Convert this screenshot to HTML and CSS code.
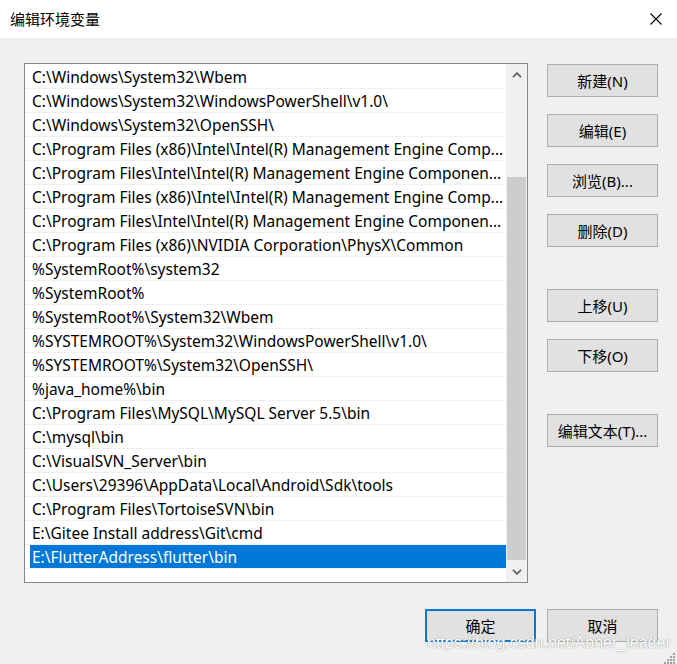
FILE: index.html
```html
<!DOCTYPE html>
<html lang="zh-CN">
<head>
<meta charset="utf-8">
<title>编辑环境变量</title>
<link rel="stylesheet" href="styles.css">
</head>
<body>
<div class="window">
  <div class="titlebar">
    <span class="title">编辑环境变量</span>
    <span class="close">
      <svg width="12" height="12" viewBox="0 0 12 12"><path d="M0.5 0.5 L11.5 11.5 M11.5 0.5 L0.5 11.5" stroke="#000" stroke-width="1.1" fill="none"/></svg>
    </span>
  </div>
  <div class="body">
    <div class="main">
      <div class="listbox">
        <div class="rows">
          <div class="row"><span class="cell">C:\Windows\System32\Wbem</span></div>
          <div class="row"><span class="cell">C:\Windows\System32\WindowsPowerShell\v1.0\</span></div>
          <div class="row"><span class="cell">C:\Windows\System32\OpenSSH\</span></div>
          <div class="row"><span class="cell">C:\Program Files (x86)\Intel\Intel(R) Management Engine Comp...</span></div>
          <div class="row"><span class="cell">C:\Program Files\Intel\Intel(R) Management Engine Componen...</span></div>
          <div class="row"><span class="cell">C:\Program Files (x86)\Intel\Intel(R) Management Engine Comp...</span></div>
          <div class="row"><span class="cell">C:\Program Files\Intel\Intel(R) Management Engine Componen...</span></div>
          <div class="row"><span class="cell">C:\Program Files (x86)\NVIDIA Corporation\PhysX\Common</span></div>
          <div class="row"><span class="cell">%SystemRoot%\system32</span></div>
          <div class="row"><span class="cell">%SystemRoot%</span></div>
          <div class="row"><span class="cell">%SystemRoot%\System32\Wbem</span></div>
          <div class="row"><span class="cell">%SYSTEMROOT%\System32\WindowsPowerShell\v1.0\</span></div>
          <div class="row"><span class="cell">%SYSTEMROOT%\System32\OpenSSH\</span></div>
          <div class="row"><span class="cell">%java_home%\bin</span></div>
          <div class="row"><span class="cell">C:\Program Files\MySQL\MySQL Server 5.5\bin</span></div>
          <div class="row"><span class="cell">C:\mysql\bin</span></div>
          <div class="row"><span class="cell">C:\VisualSVN_Server\bin</span></div>
          <div class="row"><span class="cell">C:\Users\29396\AppData\Local\Android\Sdk\tools</span></div>
          <div class="row"><span class="cell">C:\Program Files\TortoiseSVN\bin</span></div>
          <div class="row"><span class="cell">E:\Gitee Install address\Git\cmd</span></div>
          <div class="row selected"><span class="cell">E:\FlutterAddress\flutter\bin</span></div>
        </div>
        <div class="scrollbar">
          <div class="arrow">
            <svg width="10" height="6" viewBox="0 0 10 6"><path d="M1 5.2 L5 1.2 L9 5.2" stroke="#606060" stroke-width="1.8" fill="none"/></svg>
          </div>
          <div class="track-before"></div>
          <div class="thumb"></div>
          <div class="track-after"></div>
          <div class="arrow">
            <svg width="10" height="6" viewBox="0 0 10 6"><path d="M1 0.8 L5 4.8 L9 0.8" stroke="#606060" stroke-width="1.8" fill="none"/></svg>
          </div>
        </div>
      </div>
      <div class="buttons">
        <button class="btn">新建(N)</button>
        <button class="btn">编辑(E)</button>
        <button class="btn">浏览(B)...</button>
        <button class="btn">删除(D)</button>
        <button class="btn group">上移(U)</button>
        <button class="btn">下移(O)</button>
        <button class="btn group">编辑文本(T)...</button>
      </div>
    </div>
    <div class="footer">
      <button class="btn default">确定</button>
      <button class="btn">取消</button>
    </div>
    <div class="watermark">https://blog.csdn.net/Abner_leader</div>
    <div class="grip">
      <svg width="12" height="12" viewBox="0 0 12 12" fill="#a0a0a0">
        <rect x="9" y="0" width="2" height="2"/>
        <rect x="6" y="3" width="2" height="2"/><rect x="9" y="3" width="2" height="2"/>
        <rect x="3" y="6" width="2" height="2"/><rect x="6" y="6" width="2" height="2"/><rect x="9" y="6" width="2" height="2"/>
        <rect x="0" y="9" width="2" height="2"/><rect x="3" y="9" width="2" height="2"/><rect x="6" y="9" width="2" height="2"/><rect x="9" y="9" width="2" height="2"/>
      </svg>
    </div>
  </div>
</div>
</body>
</html>
```

FILE: styles.css
```css
* { box-sizing: border-box; }
html, body { margin: 0; padding: 0; }
body {
  width: 677px;
  height: 664px;
  overflow: hidden;
  font-family: "Noto Sans", "Noto Sans CJK SC", sans-serif;
  font-size: 15px;
  color: #000;
  background: #f0f0f0;
}
.window {
  width: 677px;
  height: 664px;
  display: flex;
  flex-direction: column;
}
.titlebar {
  height: 38px;
  background: #fff;
  display: flex;
  align-items: center;
  justify-content: space-between;
  padding: 0 15px 0 10px;
}
.title {
  font-size: 15px;
  line-height: 20px;
}
.close {
  display: flex;
  align-items: center;
}
.body {
  position: relative;
  flex: 1;
  background: #f0f0f0;
  padding: 25px 19px 0 24px;
}
.main {
  display: flex;
  gap: 19px;
}
.listbox {
  width: 504px;
  height: 520px;
  border: 1px solid #828790;
  background: #fff;
  display: flex;
}
.rows {
  flex: 1;
  padding-top: 1px;
  min-width: 0;
}
.row {
  height: 24px;
  border-bottom: 1px solid #f0f0f0;
  padding-left: 5px;
  display: flex;
}
.cell {
  flex: 1;
  padding-left: 2px;
  font-size: 15.5px;
  line-height: 24px;
  white-space: nowrap;
  overflow: hidden;
}
.row.selected .cell {
  background: #0078d7;
  color: #fff;
}
.scrollbar {
  width: 21px;
  background: #f0f0f0;
  display: flex;
  flex-direction: column;
}
.arrow {
  height: 21px;
  display: flex;
  align-items: center;
  justify-content: center;
}
.track-before { height: 92px; }
.thumb {
  height: 383px;
  margin: 0 1px;
  background: #cdcdcd;
}
.track-after { flex: 1; }
.buttons {
  width: 111px;
  padding-top: 1px;
  display: flex;
  flex-direction: column;
  gap: 17px;
}
.btn {
  width: 111px;
  height: 33px;
  padding: 0;
  background: #e1e1e1;
  border: 1px solid #adadad;
  font-family: "Noto Sans", "Noto Sans CJK SC", sans-serif;
  font-size: 15px;
  color: #000;
  line-height: 20px;
}
.btn.group { margin-top: 25px; }
.btn.default {
  border: 2px solid #0078d7;
}
.footer {
  margin-top: 26px;
  display: flex;
  justify-content: flex-end;
  gap: 11px;
}
.watermark {
  position: absolute;
  left: 427px;
  top: 596px;
  font-family: "Liberation Sans", Arial, sans-serif;
  font-size: 16px;
  color: #fff;
  text-shadow: 0 0 1px #9a9a9a, 0 0 1px #9a9a9a;
  white-space: nowrap;
}
.grip {
  position: absolute;
  right: 1px;
  bottom: -1px;
  line-height: 0;
}
```
